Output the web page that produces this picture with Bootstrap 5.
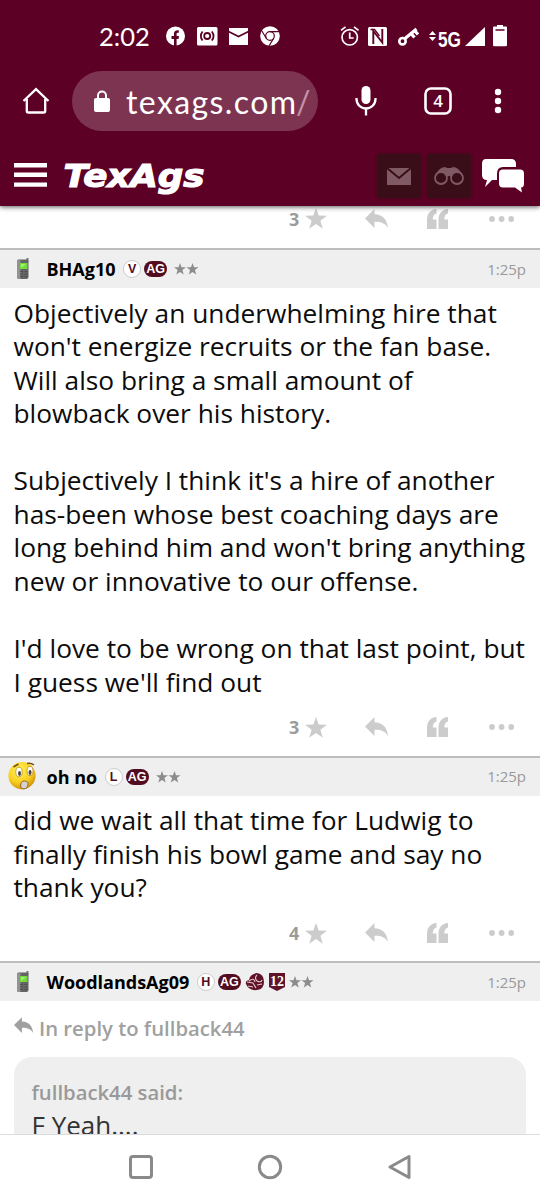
<!DOCTYPE html>
<html lang="en">
<head>
<meta charset="utf-8">
<meta name="viewport" content="width=device-width, initial-scale=1">
<title>TexAgs</title>
<link href="https://cdn.jsdelivr.net/npm/bootstrap@5.3.0/dist/css/bootstrap.min.css" rel="stylesheet">
<script src="https://cdn.jsdelivr.net/npm/bootstrap@5.3.0/dist/js/bootstrap.bundle.min.js"></script>
<style>
  body { width: 540px; height: 1200px; overflow: hidden; font-family: "Open Sans", sans-serif; color: #0c0c0c; background: #fff; }
  svg { display: block; flex: none; }
  .top-area { background: #5c0025; height: 206px; box-shadow: 0 1px 5px rgba(0,0,0,.65); position: relative; z-index: 1; flex: none; }
  .status { height: 72px; padding-left: 99px; padding-right: 32px; }
  .clock { font: 25.5px/30px Lato, sans-serif; width: 66px; }
  .browser { height: 60px; margin-top: -1px; padding-left: 22px; }
  .url { width: 246px; height: 60px; border-radius: 30px; background: #7d3451; margin-left: 22px; padding-left: 21px; }
  .address { margin-left: 14px; }
  .tools { margin-left: 32px; }
  .site { height: 60px; margin-top: 15px; padding-left: 14px; padding-right: 16px; }
  .brand { margin-left: 12px; }
  .tile { width: 44px; height: 44px; background: #3a0e19; border-radius: 3px; box-shadow: 0 0 3px #3a0e19; margin-right: 6px; }
  .chat { margin-left: 4px; }
  .feed { height: 928px; flex: none; }
  .actions { height: 56.5px; padding-left: 289px; color: #ccc; align-items: center; }
  .actions b { font-size: 18px; font-weight: 700; color: #9b9b9b; width: 16px; line-height: 24px; }
  .actions .a-reply { margin-left: 38px; }
  .actions .a-quote { margin-left: 38px; }
  .actions .a-dots { margin-left: 40px; }
  .actions.tail { height: 42px; padding-bottom: 17px; }
  .post-head { height: 40px; background: #efefef; border-top: 2px solid #bdbdbd; padding: 0 14px 0 6px; }
  .avatar { width: 34px; margin-right: 6.5px; }
  .user { font-weight: 700; font-size: 18px; color: #000; line-height: 24px; }
  .when { font-size: 15px; color: #999; }
  .said { font-size: 26.3px; line-height: 33.55px; padding: 8.6px 0 0 13.5px; white-space: nowrap; }
  .pill { font: bold 12.5px/16px "Liberation Sans", sans-serif; height: 16px; border-radius: 8px; background: #520c20; color: #fff; width: 23px; text-align: center; margin-left: 3px; }
  .ring { font: bold 12.5px/16px "Liberation Sans", sans-serif; height: 18px; width: 18px; border-radius: 50%; background: #fff; color: #520c20; border: 1px solid #ccc; text-align: center; margin-left: 7.5px; }
  .stars { color: #8c8c8c; margin-left: 7px; }
  .reply-to { font-weight: 600; font-size: 20.3px; line-height: 28px; color: #a0a0a0; padding: 13px 0 0 14px; }
  .reply-to svg { margin: 3px 5px 0 0; }
  .quoted { margin: 14.5px 14px 0 13.5px; background: #efefef; border-radius: 18px 18px 0 0; height: 100px; padding: 21px 18px 0; }
  .quoted .who { font-weight: 600; font-size: 20.3px; line-height: 28px; color: #999; }
  .quoted .what { font-size: 26px; line-height: 34px; color: #333; margin-top: 2px; }
  .nav-area { height: 66px; border-top: 1px solid #dcdcdc; background: #fff; flex: none; padding-left: 128px; }
</style>
</head>
<body class="d-flex flex-column">

<svg width="0" height="0" class="d-none">
  <symbol id="star" viewBox="0 0 22 21"><path fill="currentColor" d="M11 0l2.700 7.400 8.300.3-6.600 5 2.400 8L11 16l-6.800 4.700 2.400-8L0 7.700l8.300-.3z"/></symbol>
  <symbol id="reply" viewBox="0 0 24 20"><path fill="currentColor" d="M0 9.500L9.500 0v5.200C17 5.400 22 9.500 23 19c-3-5-7.500-6.500-13.500-6.200V19z"/></symbol>
  <symbol id="quote" viewBox="0 0 22 20"><path fill="currentColor" d="M9.500 0v4.500C7 5 5.800 7.500 5.800 10.500H9.500V20H0v-9C0 4.500 3.500.5 9.500 0zM21 0v4.500c-2.500.5-3.700 3-3.700 6H21V20h-9.500v-9c0-6.500 3.500-10.500 9.500-11z"/></symbol>
  <symbol id="dots" viewBox="0 0 26 6"><g fill="currentColor"><circle cx="3" cy="3" r="2.900"/><circle cx="12.600" cy="3" r="2.900"/><circle cx="22.200" cy="3" r="2.900"/></g></symbol>
  <symbol id="two" viewBox="0 0 25 12"><path fill="currentColor" d="M6 0l1.500 4.200 4.500.1-3.600 2.700 1.300 4.500L6 8.900l-3.700 2.600L3.600 7 0 4.300l4.500-.1zM18.500 0L20 4.200l4.500.1L20.900 7l1.300 4.500-3.700-2.600-3.700 2.600L16.100 7l-3.600-2.700 4.500-.1z"/></symbol>
  <symbol id="phone" viewBox="0 0 14 22">
    <path fill="#777" d="M10.500 0h2v4h-2z"/><rect x="1" y="1.500" width="11.500" height="19.500" rx="2" fill="#646464"/>
    <path fill="#929292" d="M1 3.500q0-2 2-2h1.500V21H3q-2 0-2-2z"/>
    <rect x="4" y="5" width="7.500" height="6" fill="#73da3c"/><path fill="#a2ef79" d="M5 6h5l-5 4z"/>
    <path stroke="#505050" stroke-width="1" d="M4 13.500h3M8.500 13.500h3M4 16h3M8.500 16h3M4 18.500h3M8.500 18.500h3"/>
  </symbol>
</svg>

<header class="top-area text-white">
  <div class="status d-flex align-items-center">
    <div class="clock">2:02</div>
    <svg width="116" height="20" viewBox="165 26 116 20">
      <circle cx="175.500" cy="36" r="9.500" fill="#fff"/>
      <path fill="#5c0025" d="M174 46v-7h-2.500v-3h2.500v-2.200c0-2.600 1.500-3.900 4.800-3.500v2.500c-1.700-.1-2.200.3-2.200 1.500V36h2.400l-.5 3h-1.900v7z"/>
      <rect x="197" y="27" width="20.500" height="18.500" rx="1.500" fill="#fff"/>
      <g fill="none" stroke="#5c0025" stroke-width="1.800"><circle cx="207.200" cy="36" r="3"/><path d="M202.600 31.500q-3.500 4.500 0 9M211.800 31.500q3.500 4.500 0 9"/></g>
      <path fill="#fff" d="M229 28h19v17h-19z"/><path d="M228.500 31.500l10 5 10-5" fill="none" stroke="#5c0025" stroke-width="1.600"/>
      <circle cx="270" cy="36" r="9.800" fill="#fff"/>
      <g fill="none" stroke="#5c0025" stroke-width="1.200"><circle cx="270" cy="36" r="4.300"/><path d="M270 31.700h9M266.300 38.200l-4.600-7.500M273.700 38.200l-4.600 7.600"/></g>
    </svg>
    <svg class="ms-auto" width="168" height="28" viewBox="340 22 168 28">
      <g fill="none" stroke="#fff" stroke-width="1.700"><circle cx="349.700" cy="37.300" r="7.700"/><path d="M349.700 32.500v5.500h4M341 30.300l4.500-3.500M358.500 30.300l-4.500-3.500"/></g>
      <rect x="368" y="27" width="19" height="19" rx="1.500" fill="#fff"/>
      <path d="M373.300 44V31l9 11.500V29" fill="none" stroke="#5c0025" stroke-width="1.900"/><path d="M370.500 29.500h4l5 6.500" fill="none" stroke="#5c0025" stroke-width="1.300"/>
      <g fill="none" stroke="#fff"><circle cx="402.500" cy="41.200" r="3.200" stroke-width="2.600"/><path stroke-width="3.200" d="M405 38.500l11.500-9.500M411 33.500l3.500 4M414.500 30.500l3.500 4"/></g>
      <path fill="#fff" d="M429 35h7l-3.500-4zM429 37h7l-3.500 4z"/>
      <text x="438" y="46.500" fill="#fff" font-family="Liberation Sans, sans-serif" font-weight="700" font-size="22" textLength="23" lengthAdjust="spacingAndGlyphs">5G</text>
      <path fill="#fff" d="M485 27v19h-20z"/>
      <path fill="#fff" d="M497 25h6v2h-6zM494 26.500h12q1 0 1 1V45q0 1.300-1.300 1.300h-11.400Q493 46.300 493 45V27.500q0-1 1-1z"/><path stroke="#5c0025" stroke-width="1.500" d="M495.500 30h9"/>
    </svg>
  </div>

  <div class="browser d-flex align-items-center">
    <svg width="28" height="28" viewBox="0 0 28 28"><path d="M1.500 14L14 2.200 26.500 14M4.800 12v12q0 1.500 1.500 1.500h15.400q1.500 0 1.500-1.500V12" fill="none" stroke="#fff" stroke-width="2.300"/></svg>
    <div class="url d-flex align-items-center">
      <svg width="18" height="23" viewBox="0 0 18 23"><rect x="1" y="8" width="16" height="14" rx="2" fill="#fff"/><path d="M5 9V5.500a4 4 0 0 1 8 0V9" fill="none" stroke="#fff" stroke-width="2"/></svg>
      <svg class="address" width="185" height="44" viewBox="125 80 185 44"><text x="126" y="115" fill="#fff" font-family="Lato, sans-serif" font-size="32" textLength="170">texags.com</text><text x="296" y="115" fill="#c592a8" font-family="Lato, sans-serif" font-size="32">/</text></svg>
    </div>
    <svg width="170" height="32" viewBox="350 85 170 32" class="tools">
      <rect x="361.500" y="86" width="9" height="18" rx="4.500" fill="#fff"/><path d="M356.500 98v1a9.500 9.500 0 0 0 19 0v-1M366 108v7.500" fill="none" stroke="#fff" stroke-width="2.300"/>
      <rect x="425.500" y="88.500" width="25" height="25" rx="5.500" fill="none" stroke="#fff" stroke-width="2.600"/>
      <text x="438" y="107" text-anchor="middle" fill="#fff" font-family="Open Sans, sans-serif" font-size="17" font-weight="600">4</text>
      <g fill="#fff"><circle cx="498" cy="92" r="3.200"/><circle cx="498" cy="101" r="3.200"/><circle cx="498" cy="110" r="3.200"/></g>
    </svg>
  </div>

  <div class="site d-flex align-items-center">
    <svg width="33" height="26" viewBox="0 0 33 26"><path stroke="#fff" stroke-width="4.400" d="M0 2.200h33M0 11.800h33M0 21.600h33"/></svg>
    <svg class="brand" width="146" height="40" viewBox="60 155 146 40"><text x="64.500" y="186" fill="#fff" font-family="DejaVu Sans, sans-serif" font-weight="700" font-style="italic" font-size="32" stroke="#fff" stroke-width="1.200" textLength="141" lengthAdjust="spacingAndGlyphs">TexAgs</text></svg>
    <div class="ms-auto d-flex align-items-center">
      <div class="tile d-flex align-items-center justify-content-center"><svg width="24" height="17" viewBox="0 0 24 17"><path fill="#7f5a65" d="M0 0h24v17H0z"/><path d="M0 0l12 10L24 0" fill="none" stroke="#3a0e19" stroke-width="2"/></svg></div>
      <div class="tile d-flex align-items-center justify-content-center"><svg width="30" height="20" viewBox="0 0 30 20"><path fill="#7f5a65" d="M2 8Q6 1 11 1l2 1h4l2-1q5 0 9 7l-9 3-4-1-4 1z"/><g fill="#3a0e19" stroke="#7f5a65" stroke-width="1.800"><circle cx="7" cy="12" r="6"/><circle cx="23" cy="12" r="6"/></g></svg></div>
      <svg class="chat" width="43" height="36" viewBox="0 0 43 36"><path fill="#fff" d="M5 1h25q5 0 5 5v3H22q-6 0-6 7v6h-5l-7 7 2-7q-5 0-5-5V6q0-5 4-5z"/><path fill="#fff" d="M22 11.500h17q4 0 4 4v10q0 4-3 4l1 5-7-5H22q-4 0-4-4v-10q0-4 4-4z"/></svg>
    </div>
  </div>
</header>

<main class="feed overflow-hidden">
  <div class="actions tail d-flex">
    <b>3</b><svg width="22" height="21"><use href="#star"/></svg><svg class="a-reply" width="24" height="20"><use href="#reply"/></svg><svg class="a-quote" width="22" height="20"><use href="#quote"/></svg><svg class="a-dots" width="26" height="6"><use href="#dots"/></svg>
  </div>

  <article>
    <div class="post-head d-flex align-items-center">
      <div class="avatar d-flex justify-content-center"><svg width="14" height="22"><use href="#phone"/></svg></div>
      <span class="user">BHAg10</span><span class="ring">V</span><span class="pill">AG</span><svg class="stars" width="25" height="12"><use href="#two"/></svg>
      <span class="when ms-auto">1:25p</span>
    </div>
    <div class="said">Objectively an underwhelming hire that<br>won't energize recruits or the fan base.<br>Will also bring a small amount of<br>blowback over his history.<br><br>Subjectively I think it's a hire of another<br>has-been whose best coaching days are<br>long behind him and won't bring anything<br>new or innovative to our offense.<br><br>I'd love to be wrong on that last point, but<br>I guess we'll find out</div>
    <div class="actions d-flex"><b>3</b><svg width="22" height="21"><use href="#star"/></svg><svg class="a-reply" width="24" height="20"><use href="#reply"/></svg><svg class="a-quote" width="22" height="20"><use href="#quote"/></svg><svg class="a-dots" width="26" height="6"><use href="#dots"/></svg></div>
  </article>

  <article>
    <div class="post-head d-flex align-items-center">
      <div class="avatar"><svg width="30" height="30" viewBox="0 0 30 30">
        <defs><radialGradient id="face" cx=".4" cy=".3" r=".75"><stop offset="0" stop-color="#fff25a"/><stop offset=".6" stop-color="#f8cf20"/><stop offset="1" stop-color="#c98a08"/></radialGradient></defs>
        <circle cx="16" cy="13.700" r="13.600" fill="url(#face)"/>
        <g fill="#fff" stroke="#ac8412" stroke-width=".7"><ellipse cx="13" cy="10" rx="3.200" ry="4.800"/><ellipse cx="24" cy="9" rx="3" ry="4.600"/></g>
        <ellipse cx="13.500" cy="11.500" rx="1.500" ry="2.400" fill="#4f4541"/><ellipse cx="24" cy="10.500" rx="1.500" ry="2.400" fill="#4f4541"/>
        <path d="M7.500 5l5-3M21 1.500q4-1 7 1.500" stroke="#785018" stroke-width="1.500" fill="none"/>
        <path d="M14.500 24q0-5 4-5t3.500 4-4 4-3.500-3z" fill="#d7d0d0" stroke="#96671a"/>
      </svg></div>
      <span class="user">oh no</span><span class="ring">L</span><span class="pill">AG</span><svg class="stars" width="25" height="12"><use href="#two"/></svg>
      <span class="when ms-auto">1:25p</span>
    </div>
    <div class="said">did we wait all that time for Ludwig to<br>finally finish his bowl game and say no<br>thank you?</div>
    <div class="actions d-flex"><b>4</b><svg width="22" height="21"><use href="#star"/></svg><svg class="a-reply" width="24" height="20"><use href="#reply"/></svg><svg class="a-quote" width="22" height="20"><use href="#quote"/></svg><svg class="a-dots" width="26" height="6"><use href="#dots"/></svg></div>
  </article>

  <article>
    <div class="post-head d-flex align-items-center">
      <div class="avatar d-flex justify-content-center"><svg width="14" height="22"><use href="#phone"/></svg></div>
      <span class="user">WoodlandsAg09</span><span class="ring">H</span><span class="pill">AG</span>
      <svg class="ms-1" width="20" height="18" viewBox="0 0 20 18"><path fill="#601328" d="M1 11Q0 8 4 7 5 1 12 0q7 1 7 9 0 7-7 8-8 1-11-6z"/><path d="M2 9l6 1 3 5M4 8q5-4 6 1M12 2q-3 3 0 6 4 2 5-1M3 13l5 1M12 12l5-1" fill="none" stroke="#e3c9d0" stroke-width="1.100"/></svg>
      <svg class="ms-1" width="16" height="18" viewBox="0 0 16 18"><path fill="#601328" d="M0 0h16v14l-8 4-8-4z"/><text x="8" y="12.500" text-anchor="middle" fill="#fff" font-family="Liberation Serif, serif" font-weight="700" font-size="14">12</text></svg>
      <svg class="stars ms-1" width="25" height="12"><use href="#two"/></svg>
      <span class="when ms-auto">1:25p</span>
    </div>
    <div class="reply-to d-flex"><svg width="20" height="17"><use href="#reply"/></svg><span>In reply to fullback44</span></div>
    <div class="quoted"><div class="who">fullback44 said:</div><div class="what">F Yeah....</div></div>
  </article>
</main>

<footer class="nav-area d-flex align-items-center">
  <svg width="290" height="28" viewBox="128 1154 290 28"><g fill="none" stroke="#8a8a8a" stroke-width="3" stroke-linejoin="round"><rect x="130.500" y="1156.500" width="21" height="21" rx="2.500"/><circle cx="270" cy="1167" r="10.700"/><path d="M409 1156.500v21l-19-10.500z"/></g></svg>
</footer>
</body>
</html>
